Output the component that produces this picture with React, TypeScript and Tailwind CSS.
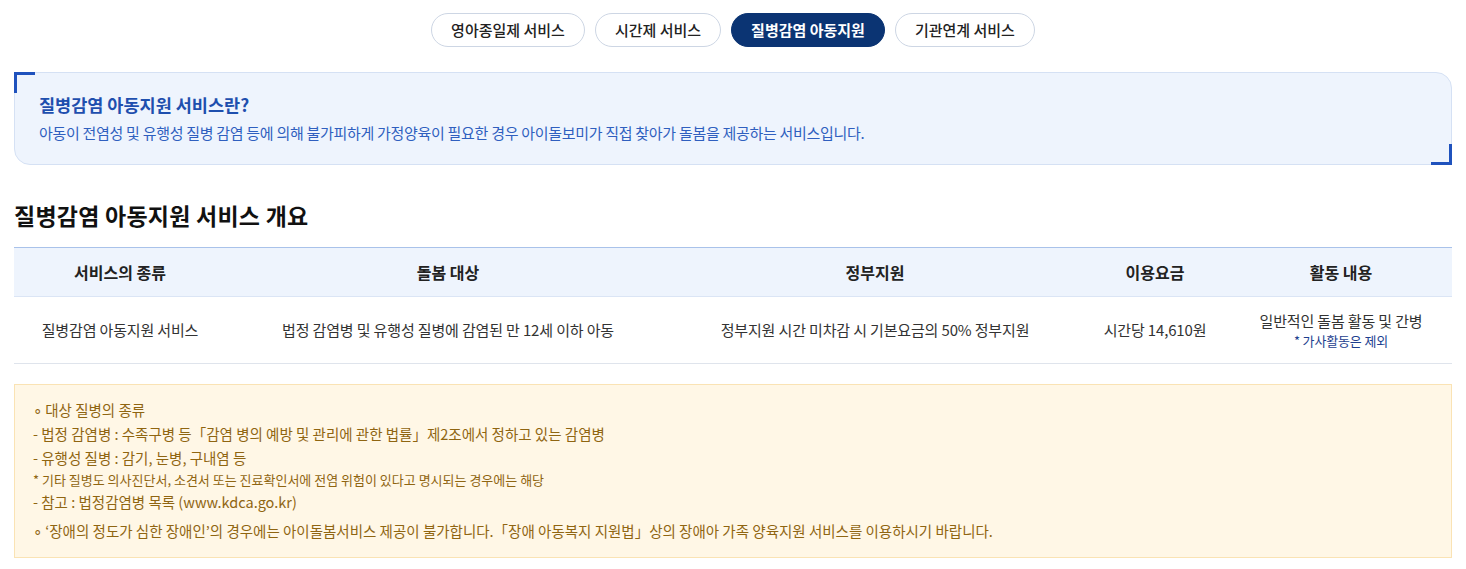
const tabs = ["영아종일제 서비스", "시간제 서비스", "질병감염 아동지원", "기관연계 서비스"];

const cols = ["서비스의 종류", "돌봄 대상", "정부지원", "이용요금", "활동 내용"];

const App = () => {
    return (
        <div className="min-h-[569px] bg-white px-[14px] pt-[13px] font-['Noto_Sans_CJK_KR','Noto_Sans',sans-serif] text-[#222]">
            <nav className="flex justify-center gap-[10px]">
                {tabs.map((t, i) => (
                    <button
                        key={t}
                        className={
                            i === 2
                                ? "h-[34px] rounded-full border border-[#0b3473] bg-[#0b3473] px-[19px] text-[15px] font-semibold text-white"
                                : "h-[34px] rounded-full border border-[#cdd6e4] bg-white px-[19px] text-[15px] font-medium text-[#222]"
                        }
                    >
                        {t}
                    </button>
                ))}
            </nav>

            <section className="relative mt-[25px] h-[93px] rounded-tr-[16px] rounded-bl-[16px] border border-[#d5e1f4] bg-[#eef4fd] px-[24px] pt-[19px]">
                <span className="absolute -left-px -top-px h-[21px] w-[21px] border-l-[3px] border-t-[3px] border-[#1f52bd]" />
                <span className="absolute -bottom-px -right-px h-[21px] w-[21px] border-b-[3px] border-r-[3px] border-[#1f52bd]" />
                <h2 className="text-[17.5px] font-bold leading-[26px] text-[#1e4fae]">질병감염 아동지원 서비스란?</h2>
                <p className="mt-[4px] text-[15px] leading-[22px] tracking-[-0.02em] text-[#2f5fbf]">
                    아동이 전염성 및 유행성 질병 감염 등에 의해 불가피하게 가정양육이 필요한 경우 아이돌보미가 직접 찾아가 돌봄을 제공하는 서비스입니다.
                </p>
            </section>

            <h3 className="mt-[35px] text-[23px] font-bold leading-[30px] tracking-[0.01em] text-[#111]">질병감염 아동지원 서비스 개요</h3>

            <div className="mt-[17px] border-t border-[#a9c2ea]">
                <div className="grid h-[49px] grid-cols-[212px_444px_410px_150px_1fr] items-center border-b border-[#dbe5f5] bg-[#eef4fd] text-center text-[16px] font-bold text-[#222]">
                    {cols.map((c) => (
                        <div key={c}>{c}</div>
                    ))}
                </div>
                <div className="grid h-[67px] grid-cols-[212px_444px_410px_150px_1fr] items-center border-b border-[#dfe4ec] text-center text-[15px] tracking-[-0.01em] text-[#333]">
                    <div>질병감염 아동지원 서비스</div>
                    <div>법정 감염병 및 유행성 질병에 감염된 만 12세 이하 아동</div>
                    <div>정부지원 시간 미차감 시 기본요금의 50% 정부지원</div>
                    <div>시간당 14,610원</div>
                    <div className="flex flex-col items-center">
                        <span className="leading-[22px]">일반적인 돌봄 활동 및 간병</span>
                        <span className="text-[13px] leading-[18px] text-[#1d3f8f]">* 가사활동은 제외</span>
                    </div>
                </div>
            </div>

            <div className="mt-[20px] border border-[#fae3b4] bg-[#fff7e6] px-[18px] pb-[14px] pt-[13px] text-[14.5px] leading-[24px] text-[#8f6511]">
                <p>∘ 대상 질병의 종류</p>
                <p>- 법정 감염병 : 수족구병 등「감염 병의 예방 및 관리에 관한 법률」제2조에서 정하고 있는 감염병</p>
                <p>- 유행성 질병 : 감기, 눈병, 구내염 등</p>
                <p className="text-[13px] leading-[20px]">* 기타 질병도 의사진단서, 소견서 또는 진료확인서에 전염 위험이 있다고 명시되는 경우에는 해당</p>
                <p>- 참고 : 법정감염병 목록 (www.kdca.go.kr)</p>
                <p className="mt-[5px]">∘ ‘장애의 정도가 심한 장애인’의 경우에는 아이돌봄서비스 제공이 불가합니다.「장애 아동복지 지원법」상의 장애아 가족 양육지원 서비스를 이용하시기 바랍니다.</p>
            </div>
        </div>
    );
};

export default App;
